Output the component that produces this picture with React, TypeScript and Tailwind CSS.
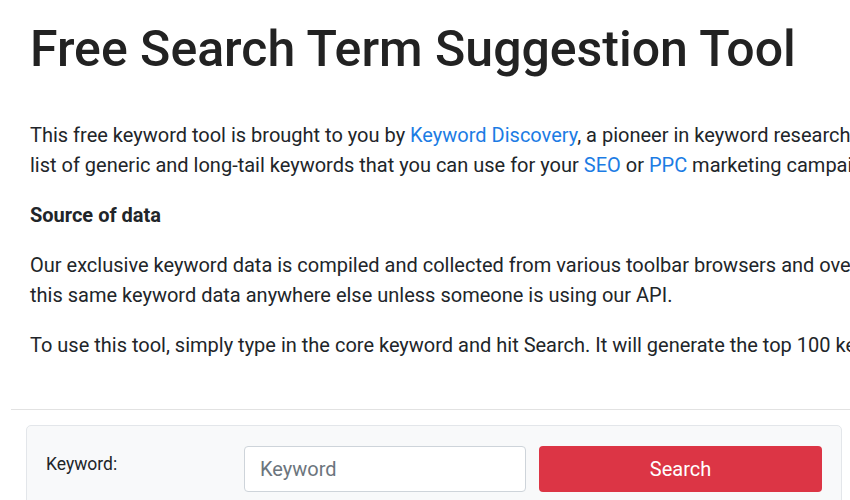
export default function App() {
  const linkCls = 'text-[#1c7ce4] hover:underline';
  return (
    <div
      className="w-[850px] h-[500px] overflow-hidden bg-white text-[#212529]"
      style={{ fontFamily: 'Roboto, "Liberation Sans", sans-serif' }}
    >
      <div className="w-[1200px]">
        <h1 className="ml-[30px] mt-[19px] mb-[41px] text-[50px] leading-[60px] font-medium text-[#222]">
          Free Search Term Suggestion Tool
        </h1>

        <div className="pl-[30px] text-[20px] leading-[30px] whitespace-nowrap">
          <p className="mb-[20px]">
            This free keyword tool is brought to you by{' '}
            <a href="#" className={linkCls}>Keyword Discovery</a>, a pioneer in keyword research. This tool will generate a
            <br />
            list of generic and long-tail keywords that you can use for your{' '}
            <a href="#" className={linkCls}>SEO</a> or <a href="#" className={linkCls}>PPC</a> marketing campaigns.
          </p>
          <p className="mb-[20px] font-bold">Source of data</p>
          <p className="mb-[20px]">
            Our exclusive keyword data is compiled and collected from various toolbar browsers and over 200 search engines. You won't find
            <br />
            this same keyword data anywhere else unless someone is using our API.
          </p>
          <p>
            To use this tool, simply type in the core keyword and hit Search. It will generate the top 100 keywords related to your term.
          </p>
        </div>

        <hr className="ml-[11px] mt-[49px] border-0 border-t border-[#e2e2e2]" />

        <div className="ml-[26px] mt-[15px] w-[816px] rounded-[5px] border border-[#e3e6ea] bg-[#f8f9fa] px-[19px] pt-[20px] pb-[20px]">
          <div className="flex items-start">
            <label className="w-[198px] pt-[6px] text-[17.5px] leading-[24px] text-[#212529]">Keyword:</label>
            <input
              type="text"
              placeholder="Keyword"
              className="h-[46px] w-[282px] rounded-[4px] border border-[#ced4da] bg-white px-[15px] text-[20px] placeholder:text-[#6c757d] outline-none"
            />
            <button className="ml-[13px] h-[46px] w-[283px] rounded-[4px] bg-[#dc3545] text-[20px] text-white">
              Search
            </button>
          </div>
        </div>
      </div>
    </div>
  );
}
